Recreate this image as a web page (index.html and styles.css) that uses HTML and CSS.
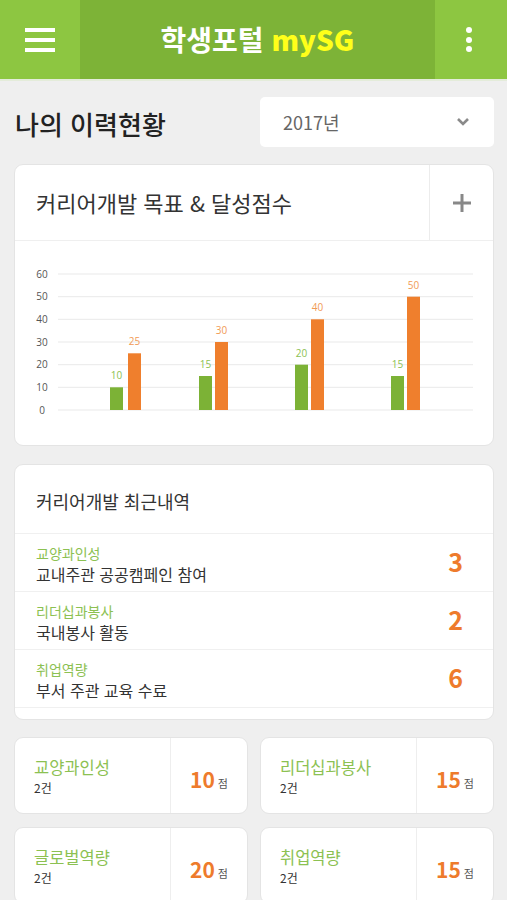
FILE: index.html
```html
<!DOCTYPE html>
<html lang="ko">
<head>
    <meta charset="UTF-8">
    <meta name="viewport" content="width=device-width, initial-scale=1.0">
    <link rel="stylesheet" href="styles.css">
    <title>학생포털 mySG</title>
</head>
<body>
    <div class="topbar">
        <div class="menu-btn">
            <span></span><span></span><span></span>
        </div>
        <div class="brand">학생포털 <b>mySG</b></div>
        <div class="more-btn">
            <i></i><i></i><i></i>
        </div>
    </div>

    <div class="content">
        <div class="title-row">
            <h1>나의 이력현황</h1>
            <div class="year-select">
                <span>2017년</span>
                <svg width="14" height="10" viewBox="0 0 14 10"><polyline points="2,2 7,7 12,2" fill="none" stroke="#8a8a8a" stroke-width="2.6"/></svg>
            </div>
        </div>

        <div class="card">
            <div class="card-head">
                <div class="card-title">커리어개발 목표 &amp; 달성점수</div>
                <div class="add-btn">
                    <svg width="20" height="20" viewBox="0 0 20 20"><path d="M10 1v18M1 10h18" stroke="#888" stroke-width="3"/></svg>
                </div>
            </div>
            <div class="chart">
                <svg width="478" height="204" viewBox="0 0 478 204">
                    <g stroke="#e9e9e9" stroke-width="1">
                        <line x1="43" y1="33" x2="458" y2="33"/>
                        <line x1="43" y1="55.7" x2="458" y2="55.7"/>
                        <line x1="43" y1="78.3" x2="458" y2="78.3"/>
                        <line x1="43" y1="101" x2="458" y2="101"/>
                        <line x1="43" y1="123.7" x2="458" y2="123.7"/>
                        <line x1="43" y1="146.3" x2="458" y2="146.3"/>
                        <line x1="43" y1="169" x2="458" y2="169"/>
                    </g>
                    <g class="axis" text-anchor="middle">
                        <text x="27" y="36.5">60</text>
                        <text x="27" y="59.2">50</text>
                        <text x="27" y="81.8">40</text>
                        <text x="27" y="104.5">30</text>
                        <text x="27" y="127.2">20</text>
                        <text x="27" y="149.8">10</text>
                        <text x="27" y="172.5">0</text>
                    </g>
                    <g fill="#7cb236">
                        <rect x="95" y="146.3" width="13" height="22.7"/>
                        <rect x="184" y="135" width="13" height="34"/>
                        <rect x="280" y="123.7" width="13" height="45.3"/>
                        <rect x="376" y="135" width="13" height="34"/>
                    </g>
                    <g fill="#ef7f2d">
                        <rect x="113" y="112.3" width="13" height="56.7"/>
                        <rect x="200" y="101" width="13" height="68"/>
                        <rect x="296" y="78.3" width="13" height="90.7"/>
                        <rect x="392" y="55.7" width="13" height="113.3"/>
                    </g>
                    <g class="val-g" text-anchor="middle">
                        <text x="101.5" y="138">10</text>
                        <text x="190.5" y="127">15</text>
                        <text x="286.5" y="115.5">20</text>
                        <text x="382.5" y="127">15</text>
                    </g>
                    <g class="val-o" text-anchor="middle">
                        <text x="119.5" y="104">25</text>
                        <text x="206.5" y="93">30</text>
                        <text x="302.5" y="70">40</text>
                        <text x="398.5" y="47.5">50</text>
                    </g>
                </svg>
            </div>
        </div>

        <div class="card recent">
            <div class="recent-title">커리어개발 최근내역</div>
            <div class="recent-row">
                <div class="recent-text">
                    <div class="cat">교양과인성</div>
                    <div class="desc">교내주관 공공캠페인 참여</div>
                </div>
                <div class="count">3</div>
            </div>
            <div class="recent-row">
                <div class="recent-text">
                    <div class="cat">리더십과봉사</div>
                    <div class="desc">국내봉사 활동</div>
                </div>
                <div class="count">2</div>
            </div>
            <div class="recent-row">
                <div class="recent-text">
                    <div class="cat">취업역량</div>
                    <div class="desc">부서 주관 교육 수료</div>
                </div>
                <div class="count">6</div>
            </div>
        </div>

        <div class="score-grid">
            <div class="score-card">
                <div class="score-info">
                    <div class="score-name">교양과인성</div>
                    <div class="score-cnt">2건</div>
                </div>
                <div class="score-val"><b>10</b>점</div>
            </div>
            <div class="score-card">
                <div class="score-info">
                    <div class="score-name">리더십과봉사</div>
                    <div class="score-cnt">2건</div>
                </div>
                <div class="score-val"><b>15</b>점</div>
            </div>
            <div class="score-card">
                <div class="score-info">
                    <div class="score-name">글로벌역량</div>
                    <div class="score-cnt">2건</div>
                </div>
                <div class="score-val"><b>20</b>점</div>
            </div>
            <div class="score-card">
                <div class="score-info">
                    <div class="score-name">취업역량</div>
                    <div class="score-cnt">2건</div>
                </div>
                <div class="score-val"><b>15</b>점</div>
            </div>
        </div>
    </div>
</body>
</html>
```

FILE: styles.css
```css
body{
    margin: 0;
    background-color: #efefef;
    font-family: "Noto Sans CJK KR", "Noto Sans", sans-serif;
    color: #333;
}

/* top bar */
.topbar{
    display: flex;
    height: 79px;
    background-color: #8dc641;
    border-bottom: 2px solid #e4ecda;
}
.menu-btn{
    width: 80px;
    display: flex;
    flex-direction: column;
    justify-content: center;
    align-items: center;
    gap: 6px;
}
.menu-btn span{
    display: block;
    width: 30px;
    height: 4px;
    background-color: #fff;
}
.brand{
    flex: 1;
    background-color: #7db337;
    color: #fff;
    font-size: 28px;
    font-weight: 700;
    line-height: 79px;
    text-align: center;
}
.brand b{
    color: #ffff1a;
}
.more-btn{
    width: 72px;
    display: flex;
    flex-direction: column;
    justify-content: center;
    align-items: center;
    gap: 3.5px;
}
.more-btn i{
    display: block;
    width: 6px;
    height: 6px;
    border-radius: 50%;
    background-color: #fff;
    margin-left: -4px;
}

.content{
    padding: 0 13px 0 14px;
}

.title-row{
    display: flex;
    justify-content: space-between;
    align-items: center;
    margin-top: 16px;
}
h1{
    margin: 0;
    font-size: 26px;
    font-weight: 500;
    color: #222;
    padding-left: 1px;
    padding-top: 3px;
}
.year-select{
    width: 234px;
    height: 50px;
    box-sizing: border-box;
    background-color: #fff;
    border-radius: 5px;
    display: flex;
    align-items: center;
    justify-content: space-between;
    padding: 0 24px 0 23px;
    font-size: 18px;
    color: #666;
}

/* cards */
.card{
    background-color: #fff;
    border: 1px solid #e4e4e4;
    border-radius: 9px;
    margin-top: 17px;
    overflow: hidden;
}
.card-head{
    display: flex;
    height: 75px;
    border-bottom: 1px solid #efefef;
}
.card-title{
    flex: 1;
    font-size: 22px;
    line-height: 75px;
    padding-left: 21px;
    color: #333;
}
.add-btn{
    width: 63px;
    border-left: 1px solid #ececec;
    display: flex;
    align-items: center;
    justify-content: center;
}
.chart{
    height: 204px;
}
.chart svg{
    display: block;
    font-family: "Open Sans", sans-serif;
    font-size: 10px;
}
.axis{
    fill: #555;
}
.val-g{
    fill: #8cc152;
}
.val-o{
    fill: #f19a55;
}

.recent{
    margin-top: 18px;
    padding-bottom: 11px;
}
.recent-title{
    height: 68px;
    line-height: 73px;
    padding-left: 21px;
    font-size: 18px;
    color: #333;
    border-bottom: 1px solid #f0f0f0;
}
.recent-row{
    display: flex;
    justify-content: space-between;
    align-items: center;
    height: 57px;
    padding: 0 30px 0 21px;
    border-bottom: 1px solid #f0f0f0;
}
.recent-text{
    padding-top: 3px;
}
.cat{
    font-size: 14px;
    line-height: 20px;
    color: #8cc152;
}
.desc{
    font-size: 16px;
    line-height: 23px;
    color: #333;
}
.count{
    font-size: 25px;
    font-weight: 700;
    color: #ee7b2c;
    padding-bottom: 4px;
}

/* score boxes */
.score-grid{
    display: grid;
    grid-template-columns: 1fr 1fr;
    column-gap: 12px;
    row-gap: 13px;
    margin-top: 17px;
}
.score-card{
    display: flex;
    height: 77px;
    box-sizing: border-box;
    background-color: #fff;
    border: 1px solid #e4e4e4;
    border-radius: 9px;
}
.score-info{
    flex: 1;
    padding-left: 19px;
    display: flex;
    flex-direction: column;
    justify-content: center;
    border-right: 1px solid #eeeeee;
}
.score-name{
    font-size: 16.5px;
    line-height: 24px;
    color: #8cc152;
}
.score-cnt{
    font-size: 12px;
    line-height: 18px;
    color: #333;
}
.score-val{
    width: 76px;
    display: flex;
    align-items: baseline;
    justify-content: center;
    padding-top: 26px;
    box-sizing: border-box;
    font-size: 11px;
    color: #555;
}
.score-val b{
    font-size: 21px;
    color: #ee7b2c;
    margin-right: 3px;
}
```
